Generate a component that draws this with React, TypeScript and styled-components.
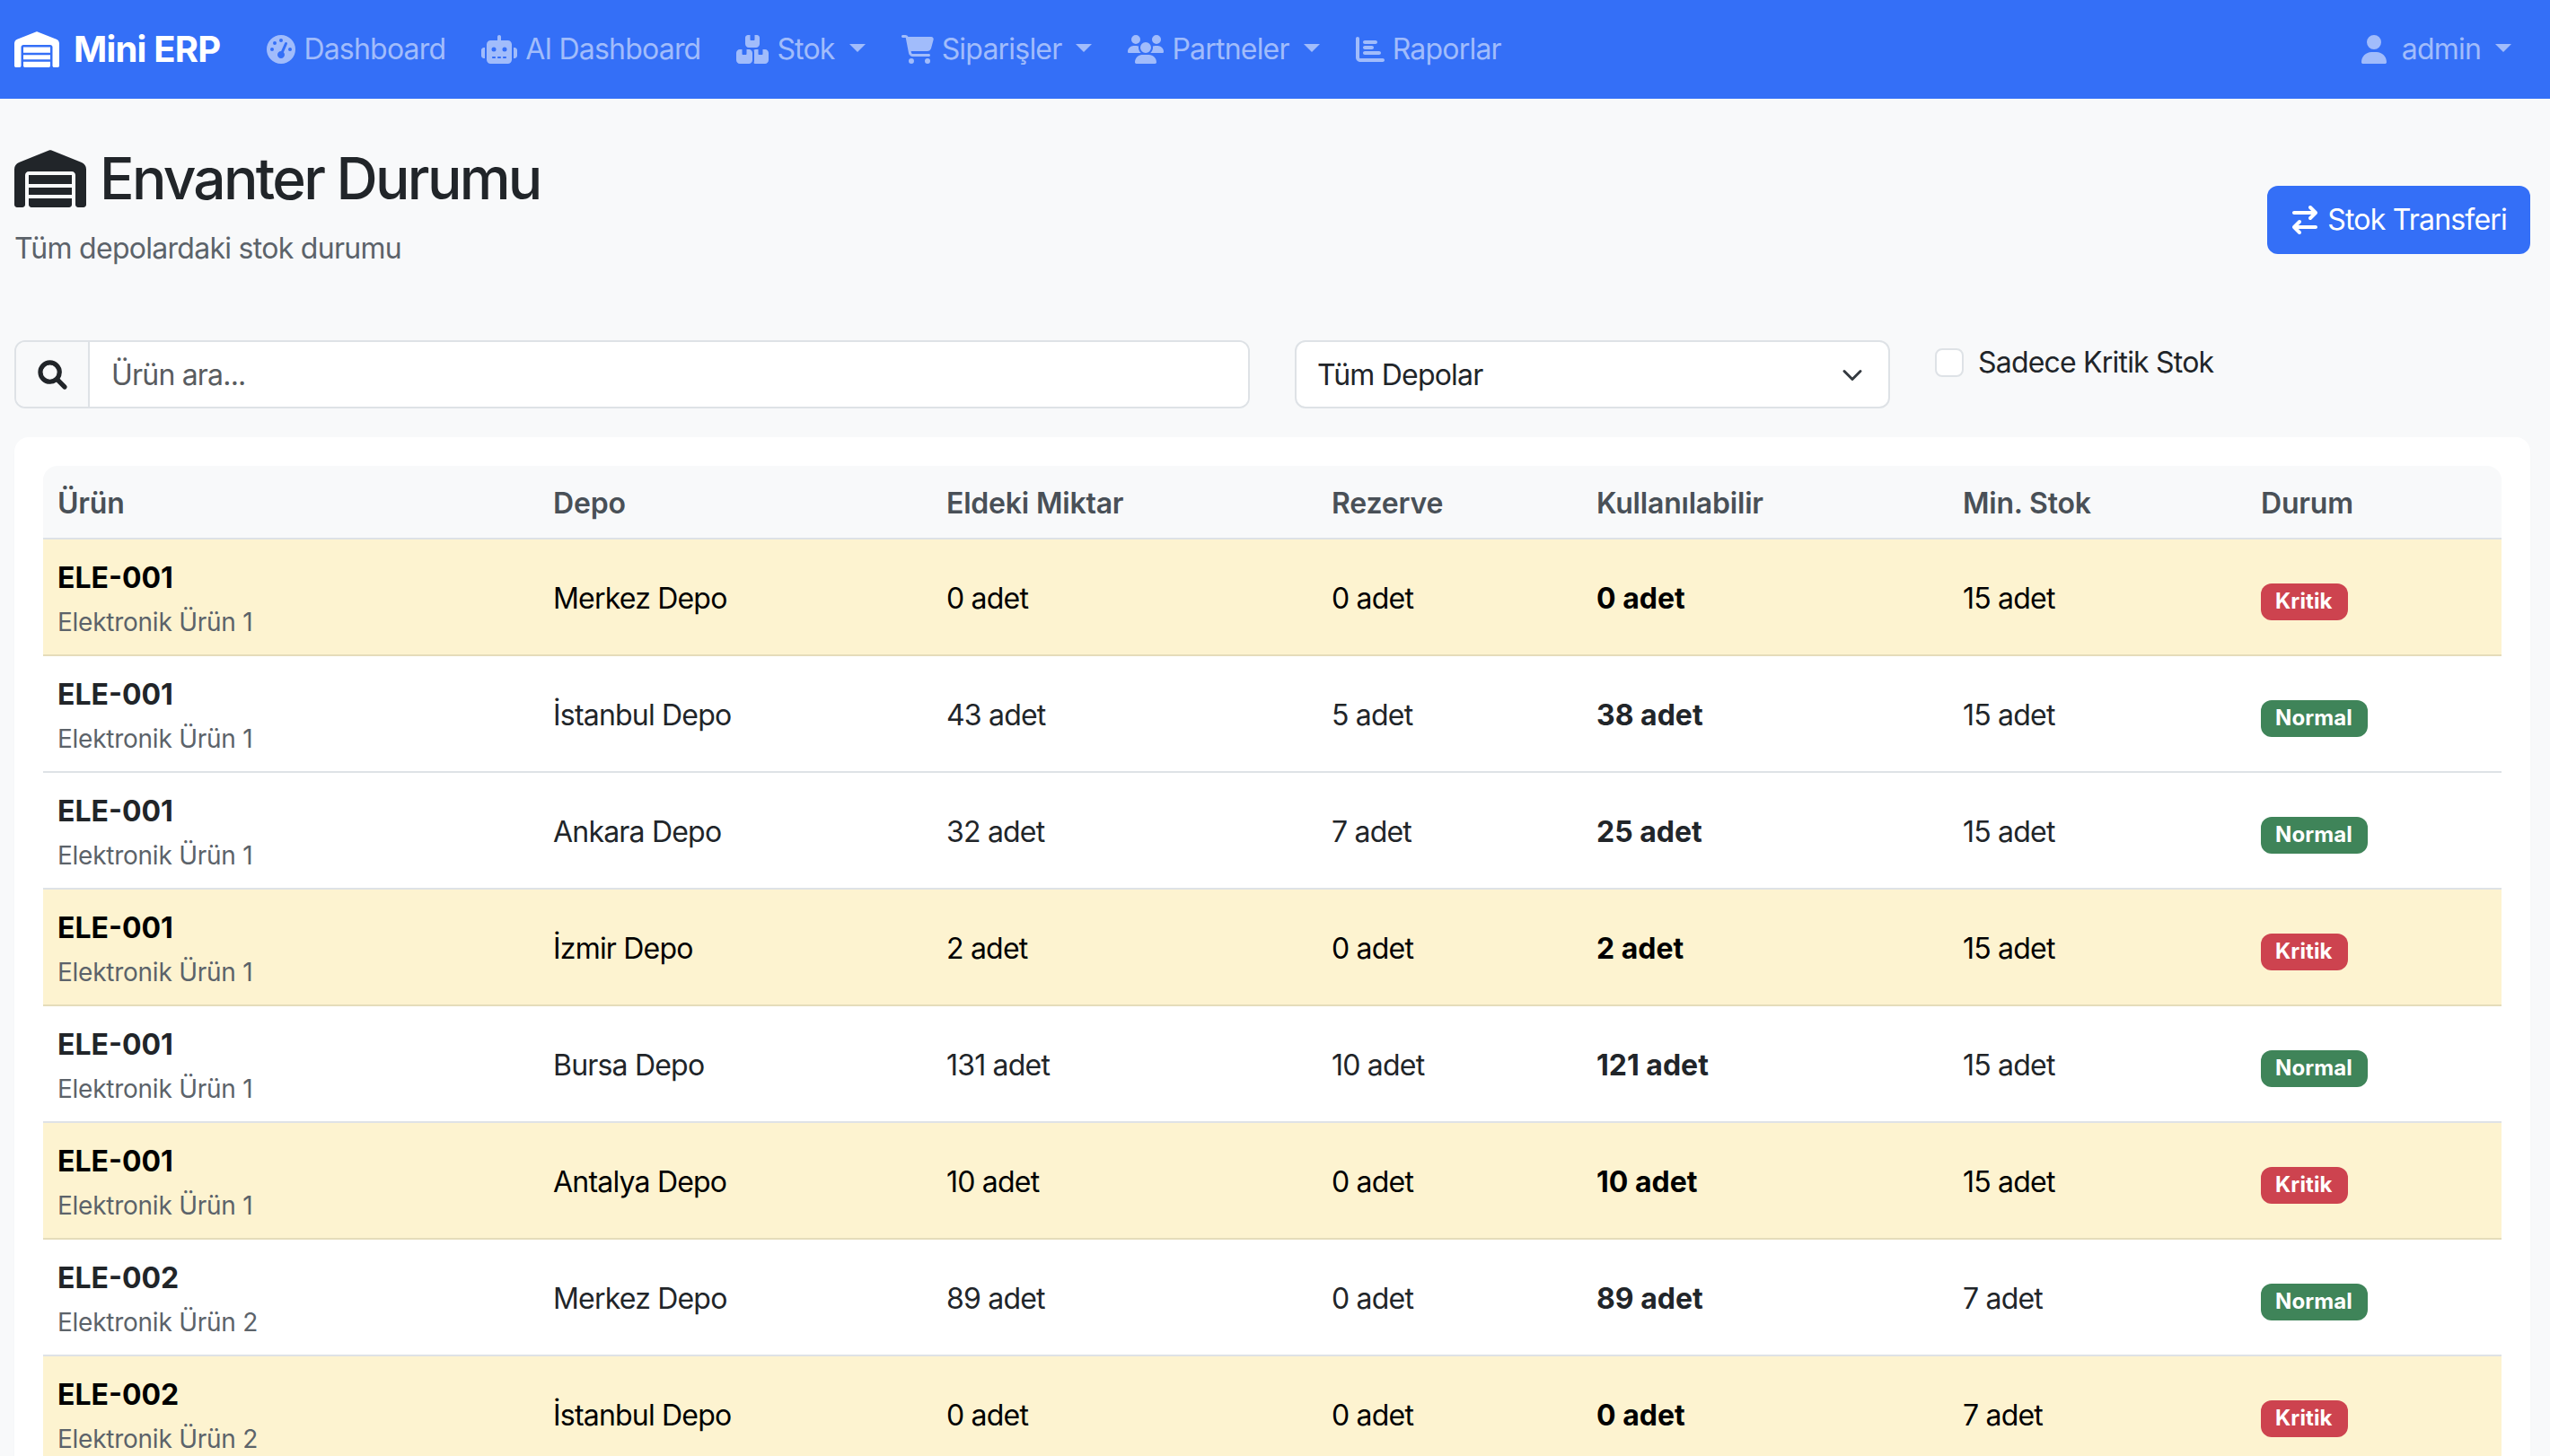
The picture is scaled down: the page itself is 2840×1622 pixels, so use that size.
import React from "react";
import styled, { createGlobalStyle } from "styled-components";
import {
  FaWarehouse, FaGaugeHigh, FaRobot, FaBoxesStacked, FaCartShopping, FaUsers,
  FaChartBar, FaUser, FaArrowRightArrowLeft, FaMagnifyingGlass,
} from "react-icons/fa6";

const Global = createGlobalStyle`
  html, body { margin: 0; padding: 0; overflow: hidden; height: 100%; }
  body { background: #f8f9fa; color: #212529; font-family: Inter, "Liberation Sans", sans-serif; font-size: 32px; line-height: 48px; letter-spacing: -0.8px; }
  * { box-sizing: border-box; }
`;

const NavBar = styled.nav`
  height: 110px; background: #346ff7; display: flex; align-items: center; padding: 0 16px;
`;
const Brand = styled.div`
  display: flex; align-items: center; gap: 16px; color: #fff; font-size: 40px; font-weight: 700; margin-right: 32px;
  letter-spacing: -0.8px;
  svg { width: 50px; height: 40px; }
`;
const NavLink = styled.div<{ $icon: number; $end?: boolean }>`
  display: flex; align-items: center; gap: 9px; padding: 0 ${p => (p.$end ? 27 : 20)}px 0 20px; color: #a1bcfb; white-space: nowrap;
  svg { height: 32px; width: ${p => p.$icon}px; flex: none; }
`;
const Caret = styled.span`
  width: 0; height: 0; margin: -3px 0 0 7px; border-top: 9px solid currentColor; border-left: 9px solid transparent; border-right: 9px solid transparent;
`;
const Spacer = styled.div`flex: 1;`;

const Main = styled.main`padding: 0 22px 0 16px;`;
const Heading = styled.header`
  display: flex; justify-content: space-between; align-items: center; height: 269px;
`;
const TitleBlock = styled.div`margin-top: -28px;`;
const Title = styled.h1`
  margin: 0; font-size: 64px; line-height: 77px; font-weight: 500; display: flex; align-items: center; gap: 15px; letter-spacing: -2.7px;
  svg { width: 80px; height: 64px; }
`;
const Subtitle = styled.p`margin: 16px 0 0; color: #5c636a; font-size: 32px; line-height: 48px; letter-spacing: -0.72px;`;
const PrimaryButton = styled.button`
  height: 76px; padding: 0 26px; background: #346ff7; color: #fff; border: 0; border-radius: 12px; font: inherit; letter-spacing: inherit; display: flex; align-items: center; gap: 9px;
  svg { width: 32px; height: 32px; }
`;

const Filters = styled.section`
  display: grid; grid-template-columns: 1376px 663px auto; column-gap: 50px; align-items: start;
`;
const SearchGroup = styled.div`
  display: flex; height: 76px; border: 2px solid #dee2e6; border-radius: 12px; overflow: hidden; background: #fff;
`;
const SearchAddon = styled.span`
  width: 82px; background: #f8f9fa; border-right: 2px solid #dee2e6; display: flex; align-items: center; justify-content: center;
  svg { width: 31px; height: 31px; stroke: currentColor; stroke-width: 22px; overflow: visible; }
`;
const SearchInput = styled.input`
  flex: 1; border: 0; outline: 0; padding: 2px 24px 0; font: inherit; letter-spacing: inherit; color: #212529;
  &::placeholder { color: #595c5f; opacity: 1; }
`;
const SelectBox = styled.div`
  height: 76px; border: 2px solid #dee2e6; border-radius: 12px; background: #fff; display: flex; align-items: center; justify-content: space-between; padding: 2px 28px 0 23px;
`;
const Chevron = styled.svg`width: 24px; height: 18px; fill: none; stroke: #343a40; stroke-width: 2; stroke-linecap: round; stroke-linejoin: round;`;
const CheckLabel = styled.label`
  display: flex; align-items: center; gap: 16px; height: 48px; position: relative; top: 1px;
`;
const CheckInput = styled.input`
  appearance: none; width: 32px; height: 32px; margin: 0; background: #fff; border: 2px solid #dee2e6; border-radius: 8px;
`;

const Card = styled.section`
  margin-top: 32px; background: #fff; border-radius: 16px; padding: 32px; box-shadow: 0 2px 4px rgba(0,0,0,.015);
`;
const Table = styled.table`
  width: 100%; table-layout: fixed; border-collapse: separate; border-spacing: 0;
`;
const Col = styled.col<{ $w: number }>`width: ${p => p.$w}px;`;
const HeadCell = styled.th`
  background: #f8f9fa; color: #495057; font-weight: 600; text-align: left; padding: 18px 16px 14px; height: 82px; border-bottom: 2px solid #dee2e6; letter-spacing: -0.2px;
  &:first-child { border-top-left-radius: 16px; }
  &:last-child { border-top-right-radius: 16px; }
`;
const Cell = styled.td<{ $warn: boolean }>`
  height: 130px; padding: 18px 16px 14px; vertical-align: middle; border-bottom: 2px solid ${p => (p.$warn ? "#e5dcba" : "#dee2e6")};
  background: ${p => (p.$warn ? "#fdf3d0" : "#fff")}; color: ${p => (p.$warn ? "#000" : "#212529")};
`;
const Code = styled.div`font-weight: 700; line-height: 48px; letter-spacing: 0;`;
const ProductName = styled.div`font-size: 28px; line-height: 42px; color: #5c636a; margin-top: 4px; letter-spacing: -0.25px;`;
const Strong = styled.span`font-weight: 700; letter-spacing: 0;`;
const Badge = styled.span<{ $warn: boolean }>`
  display: inline-block; font-size: 24px; font-weight: 700; line-height: 24px; padding: 8px 17px 9px 16px; border-radius: 12px; color: #fff; letter-spacing: 0.1px;
  background: ${p => (p.$warn ? "#cd434f" : "#3f8459")};
`;

const widths = [552, 438, 429, 295, 408, 332, 284];
const heads = ["Ürün", "Depo", "Eldeki Miktar", "Rezerve", "Kullanılabilir", "Min. Stok", "Durum"];
type Row = { code: string; name: string; depot: string; qty: number; res: number; avail: number; min: number; warn: boolean };
const rows: Row[] = [
  { code: "ELE-001", name: "Elektronik Ürün 1", depot: "Merkez Depo", qty: 0, res: 0, avail: 0, min: 15, warn: true },
  { code: "ELE-001", name: "Elektronik Ürün 1", depot: "İstanbul Depo", qty: 43, res: 5, avail: 38, min: 15, warn: false },
  { code: "ELE-001", name: "Elektronik Ürün 1", depot: "Ankara Depo", qty: 32, res: 7, avail: 25, min: 15, warn: false },
  { code: "ELE-001", name: "Elektronik Ürün 1", depot: "İzmir Depo", qty: 2, res: 0, avail: 2, min: 15, warn: true },
  { code: "ELE-001", name: "Elektronik Ürün 1", depot: "Bursa Depo", qty: 131, res: 10, avail: 121, min: 15, warn: false },
  { code: "ELE-001", name: "Elektronik Ürün 1", depot: "Antalya Depo", qty: 10, res: 0, avail: 10, min: 15, warn: true },
  { code: "ELE-002", name: "Elektronik Ürün 2", depot: "Merkez Depo", qty: 89, res: 0, avail: 89, min: 7, warn: false },
  { code: "ELE-002", name: "Elektronik Ürün 2", depot: "İstanbul Depo", qty: 0, res: 0, avail: 0, min: 7, warn: true },
];

export default function App() {
  return (
    <>
      <Global />
      <NavBar>
        <Brand><FaWarehouse />Mini ERP</Brand>
        <NavLink $icon={32}><FaGaugeHigh />Dashboard</NavLink>
        <NavLink $icon={40}><FaRobot />AI Dashboard</NavLink>
        <NavLink $icon={36}><FaBoxesStacked />Stok<Caret /></NavLink>
        <NavLink $icon={36}><FaCartShopping />Siparişler<Caret /></NavLink>
        <NavLink $icon={40}><FaUsers />Partneler<Caret /></NavLink>
        <NavLink $icon={32}><FaChartBar />Raporlar</NavLink>
        <Spacer />
        <NavLink $icon={28} $end><FaUser />&nbsp;admin<Caret /></NavLink>
      </NavBar>
      <Main>
        <Heading>
          <TitleBlock>
            <Title><FaWarehouse />Envanter Durumu</Title>
            <Subtitle>Tüm depolardaki stok durumu</Subtitle>
          </TitleBlock>
          <PrimaryButton><FaArrowRightArrowLeft />Stok Transferi</PrimaryButton>
        </Heading>
        <Filters>
          <SearchGroup>
            <SearchAddon><FaMagnifyingGlass /></SearchAddon>
            <SearchInput placeholder="Ürün ara..." />
          </SearchGroup>
          <SelectBox>
            Tüm Depolar
            <Chevron viewBox="0 0 16 12"><path d="m2 3 6 6 6-6" /></Chevron>
          </SelectBox>
          <CheckLabel><CheckInput type="checkbox" />Sadece Kritik Stok</CheckLabel>
        </Filters>
        <Card>
          <Table>
            <colgroup>{widths.map((w, i) => <Col key={i} $w={w} />)}</colgroup>
            <thead><tr>{heads.map(h => <HeadCell key={h}>{h}</HeadCell>)}</tr></thead>
            <tbody>
              {rows.map((r, i) => (
                <tr key={i}>
                  <Cell $warn={r.warn}><Code>{r.code}</Code><ProductName>{r.name}</ProductName></Cell>
                  <Cell $warn={r.warn}>{r.depot}</Cell>
                  <Cell $warn={r.warn}>{r.qty} adet</Cell>
                  <Cell $warn={r.warn}>{r.res} adet</Cell>
                  <Cell $warn={r.warn}><Strong>{r.avail} adet</Strong></Cell>
                  <Cell $warn={r.warn}>{r.min} adet</Cell>
                  <Cell $warn={r.warn}><Badge $warn={r.warn}>{r.warn ? "Kritik" : "Normal"}</Badge></Cell>
                </tr>
              ))}
            </tbody>
          </Table>
        </Card>
      </Main>
    </>
  );
}
